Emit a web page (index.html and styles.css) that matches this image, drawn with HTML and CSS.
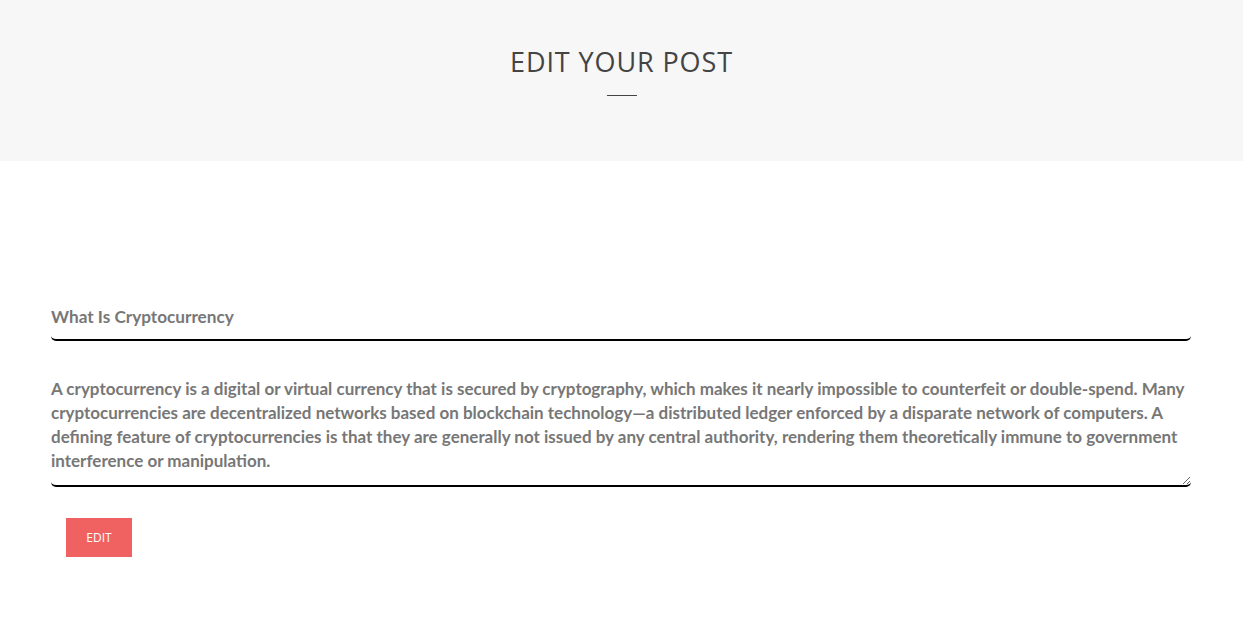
FILE: index.html
```html
<!DOCTYPE html>
<html>
<head>
<meta charset="utf-8">
<link rel="stylesheet" href="styles.css">
</head>
<body>
<header class="page-header">
  <h1 class="page-title">EDIT YOUR POST</h1>
  <div class="title-rule"></div>
</header>
<main class="container">
  <form class="post-form">
    <input class="field field-title" type="text" value="What Is Cryptocurrency">
    <textarea class="field field-body" rows="4">A cryptocurrency is a digital or virtual currency that is secured by cryptography, which makes it nearly impossible to counterfeit or double-spend. Many cryptocurrencies are decentralized networks based on blockchain technology—a distributed ledger enforced by a disparate network of computers. A defining feature of cryptocurrencies is that they are generally not issued by any central authority, rendering them theoretically immune to government interference or manipulation.</textarea>
    <div class="actions">
      <button class="btn-edit" type="button">EDIT</button>
    </div>
  </form>
</main>
</body>
</html>
```
FILE: styles.css
```css
html, body {
  margin: 0;
  padding: 0;
  background: #fff;
}
body {
  font-family: Lato, "Open Sans", sans-serif;
}
.page-header {
  background: #f7f7f7;
  height: 161px;
  box-sizing: border-box;
  padding-top: 44px;
  display: flex;
  flex-direction: column;
  align-items: center;
}
.page-title {
  margin: 0;
  font-family: "Open Sans", Inter, sans-serif;
  font-weight: 400;
  font-size: 27px;
  line-height: 36px;
  color: #444;
  letter-spacing: 0.9px;
}
.title-rule {
  width: 30px;
  height: 1px;
  background: #444;
  margin-top: 15px;
}
.container {
  width: 1140px;
  margin: 0 0 0 51px;
  padding-top: 136px;
}
.post-form {
  display: flex;
  flex-direction: column;
}
.field {
  display: block;
  width: 100%;
  box-sizing: border-box;
  border: none;
  border-bottom: 2px solid #000;
  border-radius: 5px;
  background: transparent;
  font-family: Lato, sans-serif;
  font-weight: 700;
  font-size: 17px;
  color: #777;
  padding: 0;
  outline: none;
}
.field-title {
  height: 44px;
  line-height: 24px;
  padding-bottom: 4px;
  font-size: 17.2px;
}
.field-body {
  margin-top: 25px;
  line-height: 24px;
  padding-top: 11px;
  padding-bottom: 11px;
  height: 121px;
  resize: vertical;
}
.actions {
  padding: 31px 15px 0;
}
.btn-edit {
  width: 66px;
  height: 39px;
  background: #f06262;
  border: none;
  border-radius: 0;
  color: #fff;
  font-family: "Open Sans", Inter, sans-serif;
  font-size: 12px;
  padding: 0;
}
```
